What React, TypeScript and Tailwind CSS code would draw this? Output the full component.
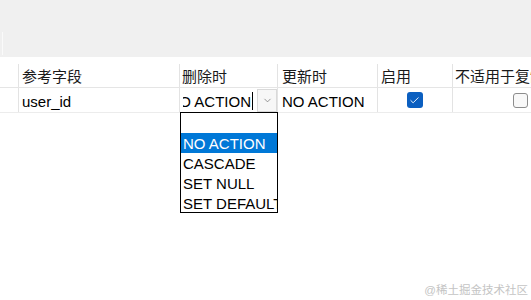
import { Check, ChevronDown } from "lucide-react";

const FONT = { fontFamily: '"Liberation Sans", "Noto Sans CJK SC", sans-serif' };

const cols = "grid grid-cols-[18px_161px_98px_100px_75px_136px]";

const actions = ["NO ACTION", "CASCADE", "SET NULL", "SET DEFAULT"];

export default function App() {
  return (
    <div className="relative h-[300px] w-[531px] overflow-hidden bg-white text-[15px] text-[#1a1a1a]" style={FONT}>
      {/* toolbar strip */}
      <div className="h-[57px] bg-[#f0f0f0] pt-[32px]">
        <div className="h-[23px] w-[3px] border-r border-[#fafafa]" />
      </div>

      {/* header */}
      <div className="pt-[7px]">
        <div className={`${cols} w-[588px] border-b border-[#e5e5e5]`}>
          <div className="h-[23px]" />
          <div className="h-[23px] border-l border-[#e3e3e3] pl-[3px] leading-[26px]">参考字段</div>
          <div className="h-[23px] border-l border-[#e3e3e3] pl-[2px] leading-[26px]">删除时</div>
          <div className="h-[23px] border-l border-[#e3e3e3] pl-[4px] leading-[26px]">更新时</div>
          <div className="h-[23px] border-l border-[#e3e3e3] pl-[3px] leading-[26px]">启用</div>
          <div className="h-[23px] overflow-hidden whitespace-nowrap border-l border-[#e3e3e3] pl-[2px] leading-[26px]">不适用于复制</div>
        </div>
      </div>

      {/* row */}
      <div className={`${cols} w-[588px] border-b border-[#ececec] text-black`}>
        <div className="h-[24px]" />
        <div className="h-[24px] border-l border-[#e3e3e3] pl-[3px] leading-[27px]">user_id</div>
        <div className="relative flex h-[24px] border-l border-[#e3e3e3]">
          <div className="ml-[3px] flex w-[70px] justify-end overflow-hidden whitespace-nowrap leading-[27px]">
            <span>NO ACTION</span>
            <span className="ml-[1px] mt-[4px] h-[18px] w-px shrink-0 bg-black" />
          </div>
          <div className="ml-[4px] mt-[1px] flex h-[23px] w-[20px] items-center justify-center border border-[#d9d9d9] bg-[#f7f7f7]">
            <ChevronDown className="h-[11px] w-[11px] text-[#6b6b6b]" strokeWidth={1.5} />
          </div>
          <div className="absolute left-0 top-[24px] z-10 h-[101px] w-[98px] overflow-hidden border border-black bg-white">
            <div className="h-[20px]" />
            {actions.map((a, i) => (
              <div
                key={a}
                className={`h-[20px] whitespace-nowrap pl-[2px] leading-[21px] ${i === 0 ? "bg-[#0078d7] text-white" : "text-black"}`}
              >
                {a}
              </div>
            ))}
          </div>
        </div>
        <div className="h-[24px] border-l border-[#e3e3e3] pl-[4px] leading-[27px]">NO ACTION</div>
        <div className="flex h-[24px] items-center justify-center border-l border-[#e3e3e3] pr-[1px]">
          <div className="flex h-[16px] w-[16px] items-center justify-center rounded-[3px] bg-[#0b5fc0]">
            <Check className="h-[11px] w-[11px] text-white" strokeWidth={2} />
          </div>
        </div>
        <div className="flex h-[24px] items-center border-l border-[#e3e3e3] pl-[60px]">
          <div className="h-[15px] w-[15px] rounded-[3px] border border-[#8c8c8c] bg-[#f8f8f8]" />
        </div>
      </div>

      <div className="absolute bottom-[1px] right-[3px] text-[11.5px] text-[#c4c4c4]">@稀土掘金技术社区</div>
    </div>
  );
}
